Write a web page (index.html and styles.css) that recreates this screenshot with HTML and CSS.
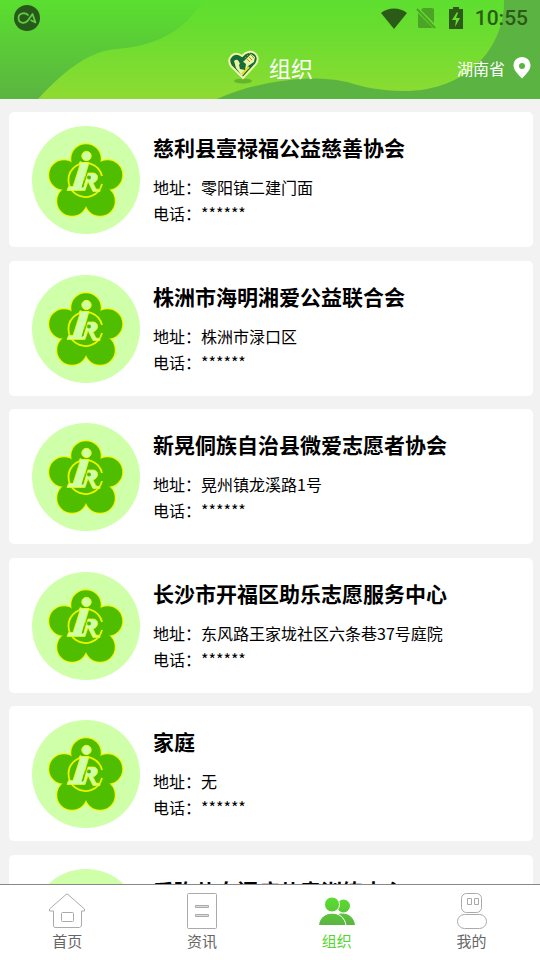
FILE: index.html
```html
<!DOCTYPE html>
<html lang="zh-CN">
<head>
<meta charset="utf-8">
<meta name="viewport" content="width=device-width, initial-scale=1">
<title>组织</title>
<link rel="stylesheet" href="styles.css">
</head>
<body>
<svg class="defs" aria-hidden="true">
  <symbol id="emblem" viewBox="0 0 108 108">
    <circle cx="54" cy="54" r="54" fill="#cfffa9"/>
    <g fill="#f4fa00">
      <circle cx="54" cy="33" r="16"/><circle cx="32" cy="49" r="16"/><circle cx="75.500" cy="49" r="16"/><circle cx="40" cy="75" r="16"/><circle cx="68" cy="75" r="16"/>
    </g>
    <g fill="#4fbd00">
      <circle cx="54" cy="33" r="14.800"/><circle cx="32" cy="49" r="14.800"/><circle cx="75.500" cy="49" r="14.800"/><circle cx="40" cy="75" r="14.800"/><circle cx="68" cy="75" r="14.800"/>
      <path d="M54 33L75.500 49 68 75H40L32 49z"/>
    </g>
    <path d="M70 50A17 17 0 1 0 70 58" fill="none" stroke="#e8f600" stroke-width="1.800"/>
    <circle cx="54.500" cy="30" r="4.700" fill="#cfffa9" stroke="#f4fa00"/>
    <path d="M50 36.500h7L50 61l2-1 4-13h6c5 1 5 8-1 10l3 6 4 .500v2h-7l-5-10-3 9H35l1.500-4H41l7-22h-1l1-3z" fill="#cfffa9" stroke="#f4fa00" stroke-width=".800"/>
    <circle cx="57" cy="51.500" r="2" fill="#4fbd00"/>
    <path d="M49.500 62l3.500-12-1.500 11z" fill="#4fbd00"/>
  </symbol>
</svg>
<header class="top">
  <svg class="top-art" viewBox="0 0 540 99" preserveAspectRatio="none" aria-hidden="true">
    <defs>
      <linearGradient id="shade" x2="0" y2="1"><stop stop-color="#5adf2f"/><stop offset="1" stop-color="#5bb441"/></linearGradient>
      <linearGradient id="wave" gradientUnits="userSpaceOnUse" x1="0" y1="0" x2="0" y2="99"><stop stop-color="#5edf2f"/><stop offset=".25" stop-color="#66dd2f"/><stop offset="1" stop-color="#8edb32"/></linearGradient>
    </defs>
    <path fill="url(#shade)" d="M0 0h540v99H0z"/>
    <path fill="url(#wave)" d="M38 99C65 70 89 51 117 49C153 46 184 33 203 0H540V99z"/>
    <path fill="#5bb441" d="M217 99C250 84 291 78 318 78.500C358 80 355 90 403 91C473 91 505 42 504 0H540V99z"/>
  </svg>
  <div class="status">
    <svg class="status-app" viewBox="0 0 26 26" aria-hidden="true"><circle cx="13" cy="13" r="13" fill="#27591a"/><path d="M14.500 10.500C12 7 4.500 7.500 4.500 13s6 6 9 3l5-7 3 8.500-5-2.500" fill="none" stroke="#62c943" stroke-width="1.800" stroke-linejoin="round"/></svg>
    <div class="status-right">
      <svg class="wifi" viewBox="0 0 26 21" aria-hidden="true"><path d="M0 5C7-1 19-1 26 5L13 21z" fill="#2b5b16"/></svg>
      <svg class="sim" viewBox="0 0 20 22" aria-hidden="true"><path d="M7 1h9l2 1v14L5 3zM2 6l15 15H3l-1-1z" fill="#4ba425"/><path d="M1 2l18 19" stroke="#4ba425" stroke-width="2"/></svg>
      <svg class="battery" viewBox="0 0 14 22" aria-hidden="true"><path d="M4 0h6v2h4v20H0V2h4z" fill="#2b5b16"/><path d="M8 5L3 13h4l-1 7 5-9H7l2-5z" fill="#65de2f"/></svg>
      <time class="clock">10:55</time>
    </div>
  </div>
  <div class="title-bar">
    <svg class="brand" viewBox="0 0 36 38" aria-hidden="true">
      <ellipse cx="18" cy="33" rx="9" ry="2.500" fill="#64b52b"/>
      <path d="M18 30L6 18C1 10 9 2 17 8C25-1 37 6 31 16z" fill="#176b35" stroke="#eef6b0" stroke-width="2"/>
      <path d="M9 13c3-3 5 0 6 3l4-3 7-7 4 3-1 5-6 4-2 5-4 5-6-8z" fill="#e8f3a5"/>
      <path d="M20 9l5 5m-3-7 5 5m-3-7 5 5" stroke="#a9981c"/>
      <path d="M17 26l7-7" stroke="#e5dc16" stroke-width="2"/>
      <path d="M17 13l4 3-1 6-5-1-1-4z" fill="#176b35"/>
    </svg>
    <h1>组织</h1>
    <button class="region" type="button">湖南省 <svg viewBox="0 0 18 22" aria-hidden="true"><path fill="#fff" fill-rule="evenodd" d="M9 0C4 0 .500 4 .500 8.500c0 5 5.500 9.500 8.500 13 3-3.500 8.500-8 8.500-13C17.500 4 14 0 9 0zm0 6a3 3 0 1 1 0 6 3 3 0 0 1 0-6z"/></svg></button>
  </div>
</header>
<main>
  <ul class="list">
    <li class="card"><svg class="avatar" aria-hidden="true"><use href="#emblem"/></svg><div class="info"><h2>慈利县壹禄福公益慈善协会</h2><p>地址：零阳镇二建门面</p><p>电话：******</p></div></li>
    <li class="card"><svg class="avatar" aria-hidden="true"><use href="#emblem"/></svg><div class="info"><h2>株洲市海明湘爱公益联合会</h2><p>地址：株洲市渌口区</p><p>电话：******</p></div></li>
    <li class="card"><svg class="avatar" aria-hidden="true"><use href="#emblem"/></svg><div class="info"><h2>新晃侗族自治县微爱志愿者协会</h2><p>地址：晃州镇龙溪路1号</p><p>电话：******</p></div></li>
    <li class="card"><svg class="avatar" aria-hidden="true"><use href="#emblem"/></svg><div class="info"><h2>长沙市开福区助乐志愿服务中心</h2><p>地址：东风路王家垅社区六条巷37号庭院</p><p>电话：******</p></div></li>
    <li class="card"><svg class="avatar" aria-hidden="true"><use href="#emblem"/></svg><div class="info"><h2>家庭</h2><p>地址：无</p><p>电话：******</p></div></li>
    <li class="card"><svg class="avatar" aria-hidden="true"><use href="#emblem"/></svg><div class="info"><h2>爱弥儿自闭症儿童训练中心</h2></div></li>
  </ul>
</main>
<nav class="tabs">
  <a href="#home"><svg viewBox="0 0 36 36" fill="none" stroke="#aaa" aria-hidden="true"><path d="M17 1.500L.500 16v2H4.500v15l1 1.500h25l2-1.500V18h3v-2L19 1.500l-1-.500z"/><rect x="12.500" y="19.500" width="12" height="9" rx="1"/></svg>首页</a>
  <a href="#news"><svg viewBox="0 0 36 36" fill="none" stroke="#aaa" aria-hidden="true"><rect x="3.500" y=".500" width="29" height="35" rx="1"/><path fill="#ddd" d="M11.500 12.500h13v2h-13zM11.500 21.500h13v2h-13z"/></svg>资讯</a>
  <a href="#org" class="active" aria-current="page"><svg viewBox="0 0 36 36" aria-hidden="true"><defs><linearGradient id="people" gradientUnits="userSpaceOnUse" x1="0" y1="4" x2="0" y2="32"><stop stop-color="#5adf2f"/><stop offset="1" stop-color="#5bb441"/></linearGradient></defs><g fill="url(#people)"><circle cx="24.500" cy="13" r="6.500"/><path d="M20 21c8-2 15 3 16 11H20z"/><g stroke="#fff"><circle cx="13" cy="11.500" r="7.500"/><path d="M-.500 32.500C1 16 25 16 27 32.500z"/></g></g></svg>组织</a>
  <a href="#me"><svg viewBox="0 0 36 36" fill="none" stroke="#aaa" aria-hidden="true"><rect x="7.500" y=".500" width="20" height="19" rx="5"/><path d="M13.500 5.500h4v6h-4zM20.500 5.500h4v6h-4z"/><rect x="3.500" y="21.500" width="29" height="14" rx="7"/></svg>我的</a>
</nav>
</body>
</html>
```

FILE: styles.css
```css
* {
  box-sizing: border-box;
}

body {
  margin: 0;
  height: 100vh;
  display: flex;
  flex-direction: column;
  overflow: hidden;
  background: #f2f2f2;
  color: #000;
  font-family: "Noto Sans CJK SC", sans-serif;
}

h1,
h2,
p,
ul {
  margin: 0;
  padding: 0;
}

.defs {
  position: absolute;
  width: 0;
  height: 0;
}

.top {
  position: relative;
  flex: none;
  padding-bottom: 9px;
}

.top-art {
  position: absolute;
  inset: 0;
  width: 100%;
  height: 100%;
}

.status,
.title-bar {
  position: relative;
}

.status {
  display: flex;
  align-items: center;
  justify-content: space-between;
  height: 36px;
  padding: 0 12px 0 14px;
}

.status-app {
  width: 26px;
  height: 26px;
}

.status-right {
  display: flex;
  align-items: center;
}

.wifi {
  width: 26px;
  height: 21px;
  margin-right: 9px;
}

.sim {
  width: 20px;
  height: 22px;
  margin-right: 13px;
}

.battery {
  width: 14px;
  height: 22px;
  margin-right: 12px;
}

.clock {
  color: #2b5b16;
  font: 500 21px/24px Roboto, sans-serif;
}

.title-bar {
  display: flex;
  align-items: center;
  justify-content: center;
  gap: 8px;
  height: 54px;
  padding: 8px 2px 0 0;
}

.brand {
  width: 36px;
  height: 38px;
}

h1 {
  color: #fff;
  font-size: 22px;
  line-height: 32px;
  font-weight: 400;
}

.region {
  position: absolute;
  right: 9px;
  bottom: 10px;
  display: flex;
  align-items: center;
  gap: 8px;
  padding: 0;
  border: 0;
  background: none;
  color: #fff;
  font: inherit;
  font-size: 16px;
  line-height: 24px;
}

.region svg {
  width: 18px;
  height: 22px;
}

main {
  flex: 1;
  min-height: 0;
  overflow: hidden;
}

.list {
  padding: 13px 7px 0 9px;
  list-style: none;
}

.card {
  display: flex;
  gap: 13px;
  height: 135px;
  margin-bottom: 14px;
  padding: 14px 23px;
  border-radius: 5px;
  background: #fff;
}

.card:nth-child(even) {
  margin-bottom: 13px;
}

.avatar {
  flex: none;
  width: 108px;
  height: 108px;
}

.info {
  padding-top: 6px;
}

h2 {
  margin-bottom: 12px;
  font-size: 21px;
  line-height: 30px;
  font-weight: 700;
}

p {
  font-size: 16px;
  line-height: 26px;
}

.tabs {
  flex: none;
  display: grid;
  grid-template-columns: repeat(4, 1fr);
  height: 76px;
  padding: 8px 1px 0 0;
  border-top: 1px solid #888;
  background: #fff;
}

.tabs a {
  display: flex;
  flex-direction: column;
  align-items: center;
  gap: 1px;
  color: #666;
  font-size: 15px;
  line-height: 22px;
  text-decoration: none;
}

.tabs svg {
  width: 36px;
  height: 36px;
}

.tabs .active {
  color: #55d62f;
}
```
